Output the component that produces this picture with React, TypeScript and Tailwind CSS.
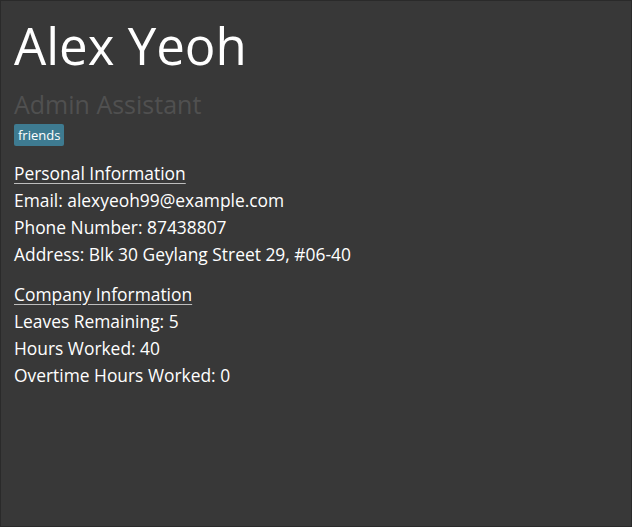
export default function App() {
  const font = { fontFamily: '"Open Sans", "Noto Sans", sans-serif' };
  return (
    <div
      className="w-[632px] h-[527px] bg-[#383838] border border-[#2a2a2a] box-border pl-[13px] pt-[14px] text-white"
      style={font}
    >
      <div className="text-[51px] leading-[60px] text-white">Alex Yeoh</div>
      <div className="mt-[14px] text-[25px] leading-[30px] text-[#505050]">Admin Assistant</div>
      <div className="mt-[5px] flex">
        <span className="h-[22px] px-[4px] rounded-[2px] bg-[#3e7b91] text-[13px] leading-[22px] text-white">friends</span>
      </div>
      <div className="mt-[14px] text-[17.4px] leading-[27px]">
        <div className="underline decoration-[#bdbdbd] underline-offset-[3px]">Personal Information</div>
        <div>Email: alexyeoh99@example.com</div>
        <div>Phone Number: 87438807</div>
        <div>Address: Blk 30 Geylang Street 29, #06-40</div>
      </div>
      <div className="mt-[13px] text-[17.4px] leading-[27px]">
        <div className="underline decoration-[#bdbdbd] underline-offset-[3px]">Company Information</div>
        <div>Leaves Remaining: 5</div>
        <div>Hours Worked: 40</div>
        <div>Overtime Hours Worked: 0</div>
      </div>
    </div>
  );
}
